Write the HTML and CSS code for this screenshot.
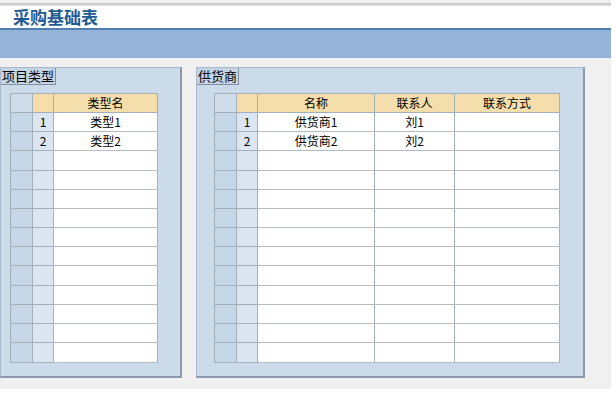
FILE: index.html
```html
<!DOCTYPE html>
<html lang="zh">
<head>
<meta charset="utf-8">
<link rel="stylesheet" href="styles.css">
</head>
<body>
<div class="app">
  <div class="topline"></div>
  <div class="titlebar"><h1 class="title">采购基础表</h1></div>
  <div class="band"></div>
  <div class="content">
    <section class="panel panel-left">
      <div class="legend">项目类型</div>
      <table class="grid">
        <colgroup><col class="c-sel"><col class="c-num"><col class="c-w104"></colgroup>
        <tr class="head"><th class="sel"></th><th></th><th>类型名</th></tr>
        <tr><td class="sel"></td><td class="num">1</td><td>类型1</td></tr>
        <tr><td class="sel"></td><td class="num">2</td><td>类型2</td></tr>
        <tr class="tall"><td class="sel"></td><td class="num"></td><td></td></tr>
        <tr><td class="sel"></td><td class="num"></td><td></td></tr>
        <tr><td class="sel"></td><td class="num"></td><td></td></tr>
        <tr><td class="sel"></td><td class="num"></td><td></td></tr>
        <tr><td class="sel"></td><td class="num"></td><td></td></tr>
        <tr><td class="sel"></td><td class="num"></td><td></td></tr>
        <tr class="tall"><td class="sel"></td><td class="num"></td><td></td></tr>
        <tr><td class="sel"></td><td class="num"></td><td></td></tr>
        <tr><td class="sel"></td><td class="num"></td><td></td></tr>
        <tr><td class="sel"></td><td class="num"></td><td></td></tr>
        <tr class="tall"><td class="sel"></td><td class="num"></td><td></td></tr>
      </table>
    </section>
    <section class="panel panel-right">
      <div class="legend">供货商</div>
      <table class="grid">
        <colgroup><col class="c-sel"><col class="c-num"><col class="c-w118"><col class="c-w80"><col class="c-w105"></colgroup>
        <tr class="head"><th class="sel"></th><th></th><th>名称</th><th>联系人</th><th>联系方式</th></tr>
        <tr><td class="sel"></td><td class="num">1</td><td>供货商1</td><td>刘1</td><td></td></tr>
        <tr><td class="sel"></td><td class="num">2</td><td>供货商2</td><td>刘2</td><td></td></tr>
        <tr class="tall"><td class="sel"></td><td class="num"></td><td></td><td></td><td></td></tr>
        <tr><td class="sel"></td><td class="num"></td><td></td><td></td><td></td></tr>
        <tr><td class="sel"></td><td class="num"></td><td></td><td></td><td></td></tr>
        <tr><td class="sel"></td><td class="num"></td><td></td><td></td><td></td></tr>
        <tr><td class="sel"></td><td class="num"></td><td></td><td></td><td></td></tr>
        <tr><td class="sel"></td><td class="num"></td><td></td><td></td><td></td></tr>
        <tr class="tall"><td class="sel"></td><td class="num"></td><td></td><td></td><td></td></tr>
        <tr><td class="sel"></td><td class="num"></td><td></td><td></td><td></td></tr>
        <tr><td class="sel"></td><td class="num"></td><td></td><td></td><td></td></tr>
        <tr><td class="sel"></td><td class="num"></td><td></td><td></td><td></td></tr>
        <tr class="tall"><td class="sel"></td><td class="num"></td><td></td><td></td><td></td></tr>
      </table>
    </section>
  </div>
</div>
</body>
</html>
```
FILE: styles.css
```css
html, body {
  margin: 0;
  padding: 0;
  background: #ffffff;
}
body {
  font-family: "Noto Sans CJK SC", "Noto Sans", sans-serif;
  font-size: 12px;
  color: #000;
}
.app {
  width: 611px;
  height: 389px;
  display: flex;
  flex-direction: column;
  background: #f0f0f0;
}
.topline {
  height: 3px;
  margin-top: 3px;
  background: linear-gradient(#bfbfbf, #e4e4e4);
}
.titlebar {
  height: 22px;
  background: #ffffff;
  padding-left: 13px;
}
.title {
  margin: 0;
  font-size: 17px;
  line-height: 22px;
  font-weight: bold;
  color: #1f5b93;
}
.band {
  height: 28px;
  border-top: 2px solid #4f7fb0;
  background: #95b3d7;
}
.content {
  flex: 1;
  display: flex;
  gap: 14px;
  padding-top: 9px;
}
.panel {
  position: relative;
  height: 311px;
  box-sizing: border-box;
  background: #cbdbea;
  border-top: 1px solid #a9b9c9;
  border-left: 1px solid #a9b9c9;
  border-right: 2px solid #8899ab;
  border-bottom: 2px solid #8899ab;
  padding-top: 25px;
}
.panel-left {
  width: 182px;
  padding-left: 9px;
}
.panel-right {
  width: 389px;
  padding-left: 17px;
}
.legend {
  position: absolute;
  left: 0;
  top: 0;
  height: 16px;
  line-height: 16px;
  padding: 0 1px;
  font-size: 13px;
  background: #c5d5e5;
  border-right: 1px solid #7f8fa0;
  border-bottom: 1px solid #7f8fa0;
}
.grid {
  border-collapse: collapse;
  table-layout: fixed;
}
.c-sel { width: 22px; }
.c-num { width: 21px; }
.c-w104 { width: 104px; }
.c-w118 { width: 117px; }
.c-w80 { width: 80px; }
.c-w105 { width: 105px; }
.grid th, .grid td {
  height: 18px;
  padding: 0;
  border: 1px solid #a3afbb;
  text-align: center;
  font-size: 12px;
  line-height: 18px;
  font-weight: normal;
  background: #ffffff;
  overflow: hidden;
  white-space: nowrap;
}
.grid tr.tall td {
  height: 19px;
}
.grid .head th {
  background: #f4dfac;
}
.grid .head th.sel {
  background: #cfdcea;
}
.grid td.sel {
  background: #c6d7e8;
}
.grid td.num {
  background: #dbe6f2;
}
.grid td:not(.sel):not(.num) {
  border-bottom-color: #b4bcc4;
}
```
